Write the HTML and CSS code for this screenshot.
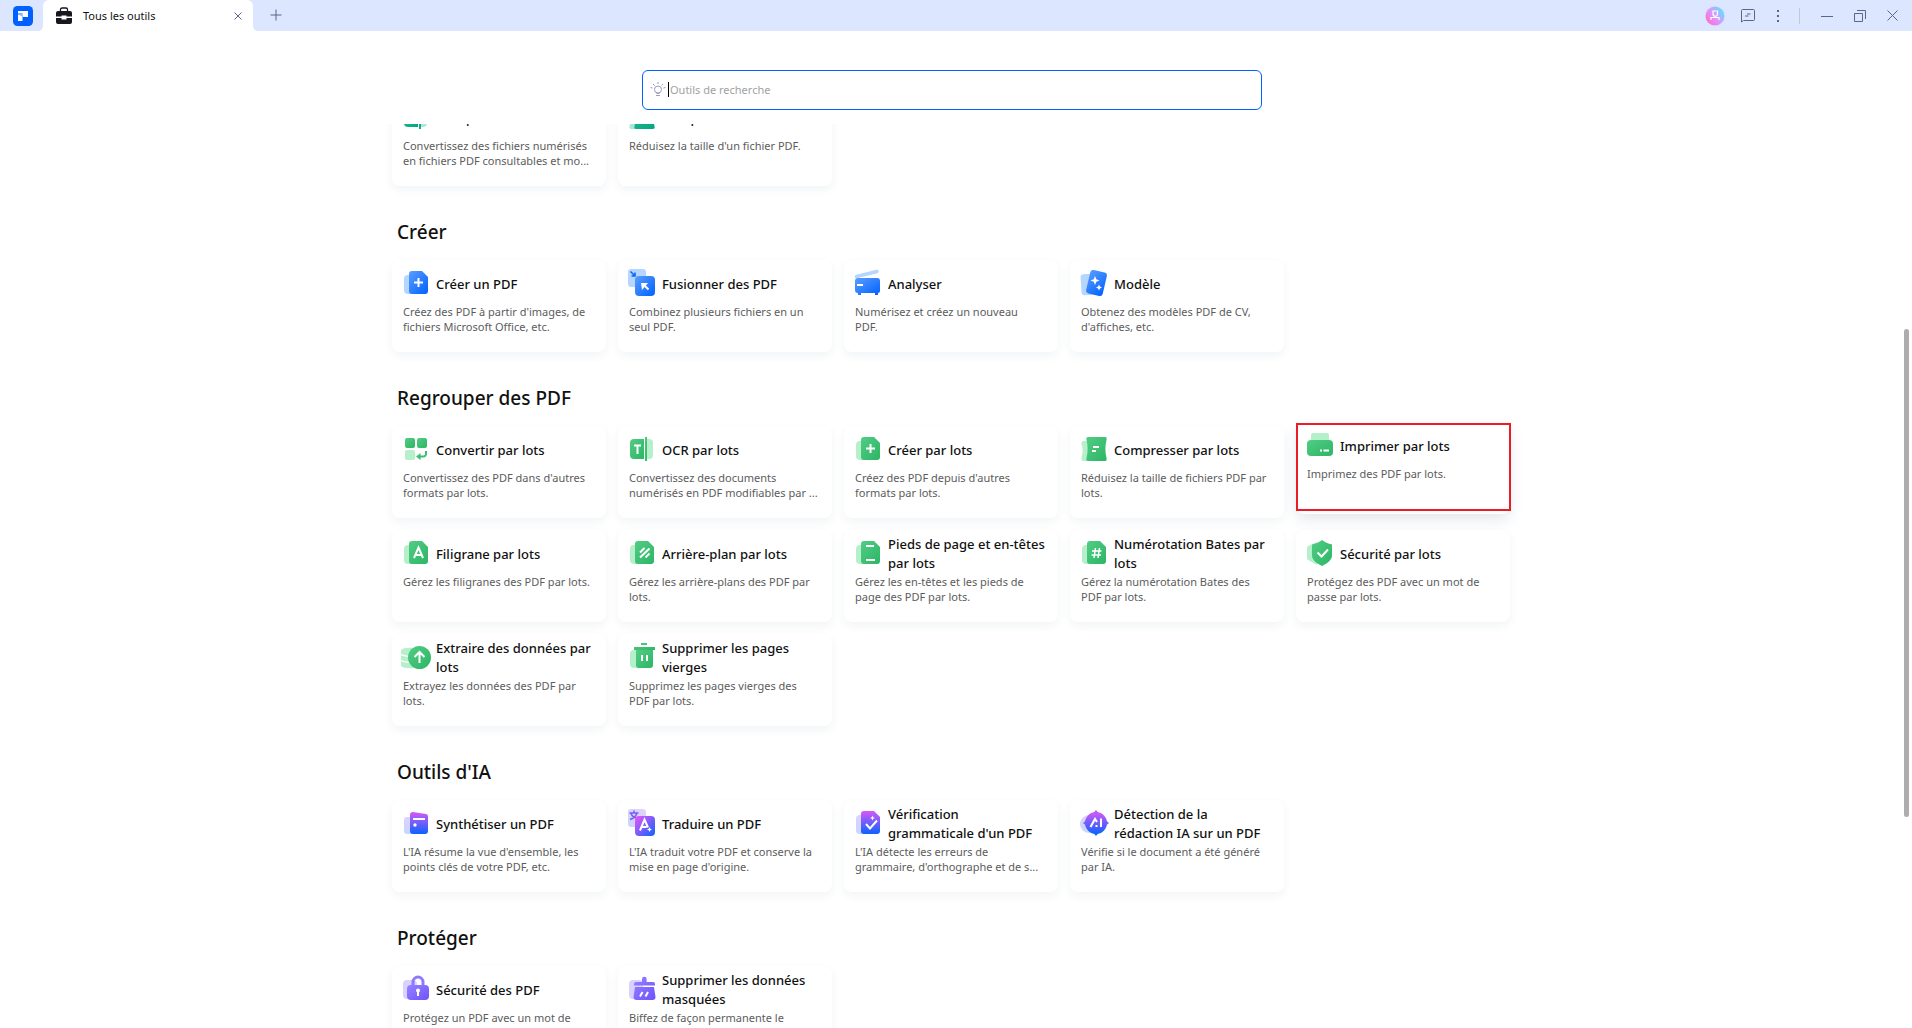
FILE: index.html
```html
<!DOCTYPE html>
<html lang="fr">
<head>
<meta charset="utf-8">
<title>Tous les outils</title>
<link rel="stylesheet" href="styles.css">
</head>
<body>
<svg class="defs" aria-hidden="true">
  <defs>
    <linearGradient id="blue" x1="0" y1="0" x2="1" y2="1"><stop offset="0" stop-color="#5a9dff"/><stop offset="1" stop-color="#0062ff"/></linearGradient>
    <linearGradient id="green" x1="0" y1="0" x2="1" y2="1"><stop offset="0" stop-color="#52cd84"/><stop offset="1" stop-color="#2cb565"/></linearGradient>
    <linearGradient id="teal" x1="0" y1="0" x2="1" y2="1"><stop offset="0" stop-color="#1fbf96"/><stop offset="1" stop-color="#07a57e"/></linearGradient>
    <linearGradient id="violet" x1="0" y1="0" x2="1" y2="1"><stop offset="0" stop-color="#9583ff"/><stop offset="1" stop-color="#6f52ff"/></linearGradient>
    <linearGradient id="ai" x1="0" y1="0" x2="0" y2="1"><stop offset="0" stop-color="#d758f7"/><stop offset="1" stop-color="#0a63ff"/></linearGradient>
    <linearGradient id="aid" x1="0" y1="0" x2="1" y2="1"><stop offset="0.1" stop-color="#d758f7"/><stop offset="1" stop-color="#0a63ff"/></linearGradient>
    <linearGradient id="ailight" x1="0" y1="1" x2="1" y2="0"><stop offset="0" stop-color="#c5d6ff"/><stop offset="1" stop-color="#e5d2fd"/></linearGradient>
    <linearGradient id="avatar" x1="0.2" y1="0.9" x2="1" y2="0.3"><stop offset="0" stop-color="#ff6fd8"/><stop offset="0.5" stop-color="#d59bff"/><stop offset="1" stop-color="#5fe0ff"/></linearGradient>
  </defs>
  <symbol id="doc" viewBox="0 0 32 30">
    <path d="M12 2h10l6 6v14a3 3 0 0 1-3 3H12a3 3 0 0 1-3-3V5a3 3 0 0 1 3-3z"/>
  </symbol>
  <symbol id="back" viewBox="0 0 32 30">
    <path d="M8 6h4v19H8a4 4 0 0 1-4-4V10a4 4 0 0 1 4-4z"/>
  </symbol>
  <symbol id="ocr" viewBox="0 0 32 30">
    <path class="main" d="M8 4h10v20H8a4 4 0 0 1-4-4V8a4 4 0 0 1 4-4z"/>
    <path class="soft" d="M21 4h2a4 4 0 0 1 4 4v12a4 4 0 0 1-4 4h-2z"/>
    <path class="main" d="M19 2h2v24h-2z"/>
    <path class="mark" d="M8 10.500h7M11.500 10.500V19"/>
  </symbol>
  <symbol id="squeeze" viewBox="0 0 32 30">
    <path class="soft" d="M6 6h6v20H6c-2 0-3-1-2.500-3 1.500-5 1.500-9 0-14C3 7 4 6 6 6z"/>
    <path class="main" d="M10 2h17c1.500 0 2 1 1.500 3-1.500 6-1.500 12 0 18 .5 2 0 3-1.500 3H10c-1.500 0-2-1-1.500-3 1.500-6 1.500-12 0-18C8 3 8.500 2 10 2z"/>
    <path class="mark" d="M15 12h6M14 16h4"/>
  </symbol>
</svg>

<header class="titlebar">
  <button class="home" aria-label="Accueil">
    <svg width="20" height="20" viewBox="0 0 20 20"><rect width="20" height="20" rx="4.500" fill="#0061ff"/><path d="M5 5h10v6H9.500V7.500H5z" fill="#fff"/><path d="M5 8.500h4.500V15H5z" fill="#fff"/><path d="M5 8.500h5V11z" fill="#9cc2ff"/></svg>
  </button>
  <div class="tab">
    <svg width="16" height="18" viewBox="0 0 16 18" fill="#16181d"><path d="M4.500 5V2.500a1.500 1.500 0 0 1 1.500-1.500h4a1.500 1.500 0 0 1 1.500 1.500V5" fill="none" stroke="#16181d" stroke-width="1.300"/><path d="M2 4h12a2 2 0 0 1 2 2v3.500h-5.500V8.500h-5v1H0V6a2 2 0 0 1 2-2zM0 11h5.500v1.500h5V11H16v4a2 2 0 0 1-2 2H2a2 2 0 0 1-2-2z"/></svg>
    <span class="tab-name">Tous les outils</span>
    <button aria-label="Fermer l'onglet"><svg width="8" height="8" viewBox="0 0 8 8" class="line"><path d="M.5.5l7 7M7.500.5l-7 7"/></svg></button>
  </div>
  <button class="new-tab" aria-label="Nouvel onglet"><svg width="12" height="12" viewBox="0 0 12 12" class="line"><path d="M6 .5v11M.5 6h11"/></svg></button>
  <div class="window-controls">
    <button class="account" aria-label="Compte"><svg width="20" height="20" viewBox="0 0 20 20"><circle cx="10" cy="10" r="9.500" fill="url(#avatar)"/><g fill="none" stroke="#fff" stroke-width="1.200"><path d="M8 5h4.500v3A2.250 2.250 0 0 1 8 8z"/><path d="M6 14v-2.500h8V14"/></g></svg></button>
    <button aria-label="Commentaires"><svg width="14" height="14" viewBox="0 0 14 14" class="line"><path d="M.5 13V1.500a1 1 0 0 1 1-1h11a1 1 0 0 1 1 1v9a1 1 0 0 1-1 1H2.500zM6 5h3.500M4 7h3.500"/></svg></button>
    <button class="more" aria-label="Plus"><svg width="4" height="14" viewBox="0 0 4 14" fill="#5b6587"><path d="M1 1h2v2H1zM1 6h2v2H1zM1 11h2v2H1z"/></svg></button>
    <span class="divider"></span>
    <button aria-label="Réduire"><svg width="12" height="12" viewBox="0 0 12 12" class="line"><path d="M0 6.500h12"/></svg></button>
    <button aria-label="Restaurer"><svg width="12" height="12" viewBox="0 0 12 12" class="line"><path d="M.5 3.500h8v8h-8zM3 .5h8.500V9"/></svg></button>
    <button aria-label="Fermer"><svg width="11" height="11" viewBox="0 0 11 11" class="line"><path d="M.5.5l10 10M10.500.5l-10 10"/></svg></button>
  </div>
</header>

<div class="search-row">
  <label class="search">
    <svg width="16" height="16" viewBox="0 0 16 16" fill="none" stroke="#9a9cc0"><circle cx="8" cy="8.500" r="3.500"/><path d="M6 14.500h4M6.500 12.500h3M8 1v2M3 3l1.500 1.500M13 3l-1.500 1.500M.5 6.500l2 .5M15.500 6.500l-2 .5"/></svg>
    <span class="caret"></span>
    <input type="text" placeholder="Outils de recherche" aria-label="Outils de recherche">
  </label>
</div>

<main class="tools">
  <div class="content">
    <section class="group scrolled">
      <div class="grid">
        <a class="card teal" href="#"><div class="head"><svg class="icon"><use href="#ocr"/></svg><h3>OCR pour PDF</h3></div><p>Convertissez des fichiers numérisés<br>en fichiers PDF consultables et mo...</p></a>
        <a class="card teal" href="#"><div class="head"><svg class="icon"><use href="#squeeze"/></svg><h3>Compresser un PDF</h3></div><p>Réduisez la taille d'un fichier PDF.</p></a>
      </div>
    </section>

    <section class="group">
      <h2>Créer</h2>
      <div class="grid">
        <a class="card blue" href="#"><div class="head"><svg class="icon" viewBox="0 0 32 30"><use class="soft" href="#back"/><use class="main" href="#doc"/><path class="mark" d="M18.500 9v9M14 13.500h9"/></svg><h3>Créer un PDF</h3></div><p>Créez des PDF à partir d'images, de fichiers Microsoft Office, etc.</p></a>
        <a class="card blue" href="#"><div class="head"><svg class="icon" viewBox="0 0 32 30"><rect class="soft" x="2" y="0" width="18" height="18" rx="3"/><path d="M4.500 2.500l4 4M9 3.500V7H5.500" fill="none" stroke="#0a69f5" stroke-width="1.600"/><rect class="main" x="9" y="7" width="20" height="20" rx="4"/><path class="mark" d="M17 15l5.500 5.500"/><path fill="#fff" d="M15 14h7l-6 7z"/></svg><h3>Fusionner des PDF</h3></div><p>Combinez plusieurs fichiers en un<br>seul PDF.</p></a>
        <a class="card blue" href="#"><div class="head"><svg class="icon" viewBox="0 0 32 30"><path d="M4.500 7.500L25 2.500" fill="none" stroke="#b5d7ff" stroke-width="3.500" stroke-linecap="round"/><path class="main" d="M6 9h19a3 3 0 0 1 3 3v10a2 2 0 0 1-2 2v2h-3v-2H9v2H6v-2a3 3 0 0 1-3-3v-9a3 3 0 0 1 3-3z"/><path class="mark" d="M5 16h6"/></svg><h3>Analyser</h3></div><p>Numérisez et créez un nouveau<br>PDF.</p></a>
        <a class="card blue" href="#"><div class="head"><svg class="icon" viewBox="0 0 32 30"><rect class="soft" x="3" y="5" width="14" height="21" rx="3" transform="rotate(-4 10 15)"/><rect class="main" x="10" y="2" width="17" height="24" rx="3" transform="rotate(13 18.500 14)"/><path fill="#fff" d="M17 7l1.300 3.200L21.500 11.500l-3.200 1.300L17 16l-1.300-3.200-3.200-1.300 3.200-1.300zM21 15.500l.9 2.100 2.100.9-2.100.9L21 21.500l-.9-2.100-2.100-.9 2.100-.9z"/></svg><h3>Modèle</h3></div><p>Obtenez des modèles PDF de CV,<br>d'affiches, etc.</p></a>
      </div>
    </section>

    <section class="group">
      <h2>Regrouper des PDF</h2>
      <div class="grid">
        <a class="card green" href="#"><div class="head"><svg class="icon" viewBox="0 0 32 30"><rect class="main" x="5" y="3" width="10" height="10" rx="2"/><rect class="main" x="17" y="3" width="10" height="10" rx="2"/><rect class="soft" x="5" y="15" width="10" height="10" rx="2"/><path d="M26 16v3a2.500 2.500 0 0 1-2.500 2.500H18" fill="none" stroke="#3cbf72" stroke-width="2"/><path class="main" d="M20.500 18v7L16 21.500z"/></svg><h3>Convertir par lots</h3></div><p>Convertissez des PDF dans d'autres formats par lots.</p></a>
        <a class="card green" href="#"><div class="head"><svg class="icon"><use href="#ocr"/></svg><h3>OCR par lots</h3></div><p>Convertissez des documents<br>numérisés en PDF modifiables par ...</p></a>
        <a class="card green" href="#"><div class="head"><svg class="icon" viewBox="0 0 32 30"><use class="soft" href="#back"/><use class="main" href="#doc"/><path class="mark" d="M18.500 9v9M14 13.500h9"/></svg><h3>Créer par lots</h3></div><p>Créez des PDF depuis d'autres<br>formats par lots.</p></a>
        <a class="card green" href="#"><div class="head"><svg class="icon"><use href="#squeeze"/></svg><h3>Compresser par lots</h3></div><p>Réduisez la taille de fichiers PDF par lots.</p></a>
        <a class="card green raised" href="#"><div class="head"><svg class="icon" viewBox="0 0 32 30"><path class="soft" d="M9 2h14a2 2 0 0 1 2 2v5H7V4a2 2 0 0 1 2-2z"/><rect class="main" x="3" y="9" width="26" height="16" rx="4"/><path class="mark" d="M16 19.500h2M19.500 19.500H25"/></svg><h3>Imprimer par lots</h3></div><p>Imprimez des PDF par lots.</p><span class="marker"></span></a>
        <a class="card green" href="#"><div class="head"><svg class="icon" viewBox="0 0 32 30"><use class="soft" href="#back"/><use class="main" href="#doc"/><path class="mark" d="M14 19l4.500-10.500L23 19M15.500 16h6"/></svg><h3>Filigrane par lots</h3></div><p>Gérez les filigranes des PDF par lots.</p></a>
        <a class="card green" href="#"><div class="head"><svg class="icon" viewBox="0 0 32 30"><use class="soft" href="#back"/><use class="main" href="#doc"/><path class="mark" d="M14 13.500l4.500-4.500M14 18.500l9.500-9M19.500 18.500l4-4"/></svg><h3>Arrière-plan par lots</h3></div><p>Gérez les arrière-plans des PDF par<br>lots.</p></a>
        <a class="card green" href="#"><div class="head"><svg class="icon" viewBox="0 0 32 30"><use class="soft" href="#back"/><use class="main" href="#doc"/><path class="mark" d="M14 7h8M14 21h9"/></svg><h3>Pieds de page et en-têtes par lots</h3></div><p>Gérez les en-têtes et les pieds de<br>page des PDF par lots.</p></a>
        <a class="card green" href="#"><div class="head"><svg class="icon" viewBox="0 0 32 30"><use class="soft" href="#back"/><use class="main" href="#doc"/><path class="mark thin" d="M17.500 9l-1.500 10M21.500 9L20 19M14 12h9.500M13.500 16H23"/></svg><h3>Numérotation Bates par lots</h3></div><p>Gérez la numérotation Bates des<br>PDF par lots.</p></a>
        <a class="card green" href="#"><div class="head"><svg class="icon" viewBox="0 0 32 30"><path class="soft" d="M13 3v23l-8-4.500a3 3 0 0 1-2-3V9a3 3 0 0 1 2-2.500z"/><path class="main" d="M18 1c3 2.500 6 3.500 10 4.500v11c0 4-4 7.500-10 10.500C12 24 8 20.500 8 16.500v-11C12 4.500 15 3.500 18 1z"/><path class="mark" d="M13.500 13.500l4 4 6.500-7"/></svg><h3>Sécurité par lots</h3></div><p>Protégez des PDF avec un mot de<br>passe par lots.</p></a>
        <a class="card green" href="#"><div class="head"><svg class="icon" viewBox="0 0 32 30"><path class="soft" d="M1 7c2-2 7-2.500 12-2v20c-5 .5-10 0-12-2z"/><path d="M0 11c3 2 7 2.500 12 2.500M0 17c3 2 7 2.500 12 2.500" fill="none" stroke="#fff" stroke-width="1.300"/><circle class="main" cx="19.500" cy="14.500" r="11.500"/><path class="mark" d="M19.500 20V9.500M14.500 14l5-5 5 5"/></svg><h3>Extraire des données par lots</h3></div><p>Extrayez les données des PDF par<br>lots.</p></a>
        <a class="card green" href="#"><div class="head"><svg class="icon" viewBox="0 0 32 30"><rect class="soft" x="4" y="7" width="12" height="18" rx="4"/><path class="main" d="M15 0h6v2h-6zM8 4h21v3H8z"/><path class="main" d="M10 7h17v15a3 3 0 0 1-3 3H13a3 3 0 0 1-3-3z"/><path class="mark" d="M16 12v6M21 12v6"/></svg><h3>Supprimer les pages vierges</h3></div><p>Supprimez les pages vierges des<br>PDF par lots.</p></a>
      </div>
    </section>

    <section class="group">
      <h2>Outils d'IA</h2>
      <div class="grid">
        <a class="card ai" href="#"><div class="head"><svg class="icon" viewBox="0 0 32 30"><rect class="soft" x="4" y="8" width="12" height="17" rx="3"/><path class="main" d="M13 3l13 2a2.500 2.500 0 0 1 2 2.500V22a3 3 0 0 1-3 3H13a3 3 0 0 1-3-3V6a3 3 0 0 1 3-3z"/><path class="mark" d="M13 10h12"/><circle cx="15" cy="16" r="1.700" fill="#fff"/></svg><h3>Synthétiser un PDF</h3></div><p>L'IA résume la vue d'ensemble, les<br>points clés de votre PDF, etc.</p></a>
        <a class="card ai" href="#"><div class="head"><svg class="icon" viewBox="0 0 32 30"><rect class="soft" x="2" y="0" width="18" height="18" rx="3"/><path d="M3.500 4h9M8 1.500V4M11 4c-1 3-3.500 5.500-7 6.500M5 4c.5 2.500 3 4.500 6 5" fill="none" stroke="#7a5cf5" stroke-width="1.500"/><rect x="9" y="7" width="20" height="20" rx="4" fill="url(#aid)"/><path class="mark" d="M14 21.500l4.500-11 3.500 8M15.500 18h5"/><path fill="#fff" d="M23.500 18l.8 1.700 1.700.8-1.700.8-.8 1.700-.8-1.700-1.700-.8 1.700-.8z"/></svg><h3>Traduire un PDF</h3></div><p>L'IA traduit votre PDF et conserve la<br>mise en page d'origine.</p></a>
        <a class="card ai" href="#"><div class="head"><svg class="icon" viewBox="0 0 32 30"><use class="soft" href="#back"/><use class="main" href="#doc"/><path class="mark" d="M14 15l4 4.500 7-8"/><path fill="#fff" d="M20.500 6.500l.7 1.800 1.800.7-1.800.7-.7 1.800-.7-1.800-1.800-.7 1.800-.7z"/></svg><h3>Vérification<br>grammaticale d'un PDF</h3></div><p>L'IA détecte les erreurs de<br>grammaire, d'orthographe et de s...</p></a>
        <a class="card ai" href="#"><div class="head"><svg class="icon" viewBox="0 0 32 30"><circle class="soft" cx="11" cy="15" r="9"/><circle class="main" cx="18" cy="14" r="11"/><path fill="#b35bf9" d="M18 1l2.500 3h-5z"/><path fill="#7a5ffc" d="M5 14l3-2.500v5zM31 14l-3-2.500v5z"/><path fill="#1465ff" d="M18 27l-2.500-3h5z"/><path class="mark" d="M12.500 18l4.500-8 2 3M23 9.500V18M17.500 17h2"/></svg><h3>Détection de la<br>rédaction IA sur un PDF</h3></div><p>Vérifie si le document a été généré<br>par IA.</p></a>
      </div>
    </section>

    <section class="group">
      <h2>Protéger</h2>
      <div class="grid">
        <a class="card violet" href="#"><div class="head"><svg class="icon" viewBox="0 0 32 30"><rect class="soft" x="3" y="5" width="14" height="19" rx="4"/><path d="M13 11V7a5 5 0 0 1 10 0v4" fill="none" stroke="#8e7aff" stroke-width="3"/><rect class="main" x="7" y="10" width="22" height="15" rx="4"/><circle cx="18" cy="15.500" r="2" fill="#fff"/><path class="mark" d="M18 16v5"/></svg><h3>Sécurité des PDF</h3></div><p>Protégez un PDF avec un mot de<br>passe.</p></a>
        <a class="card violet" href="#"><div class="head"><svg class="icon" viewBox="0 0 32 30"><rect class="soft" x="3" y="5" width="14" height="19" rx="4"/><path class="main" d="M16 7V4a2.300 2.300 0 0 1 4.600 0v3H27a2 2 0 0 1 2 2v1.500H8V9a2 2 0 0 1 2-2zM9 12h19l1.500 10a3 3 0 0 1-3 3h-16a3 3 0 0 1-3-3z"/><path class="mark" d="M16.500 17L14 21.500M22 17l-2.500 4.500"/></svg><h3>Supprimer les données masquées</h3></div><p>Biffez de façon permanente le<br>contenu.</p></a>
      </div>
    </section>
  </div>
  <span class="scroll-thumb"></span>
</main>
</body>
</html>
```
FILE: styles.css
```css
* { box-sizing: border-box; }

body {
  margin: 0;
  height: 100vh;
  display: flex;
  flex-direction: column;
  overflow: hidden;
  background: #fff;
  color: #111;
  font: 400 11px/15px "Noto Sans", sans-serif;
}

h2, h3, p { margin: 0; }
svg { display: block; flex: none; }

button {
  display: flex;
  align-items: center;
  justify-content: center;
  padding: 0;
  border: 0;
  background: none;
}

.defs { position: absolute; width: 0; height: 0; }
.line { fill: none; stroke: #5b6587; }

/* Title bar */
.titlebar {
  display: flex;
  align-items: center;
  flex: none;
  height: 31px;
  background: #dce6ff;
}

.home { width: 43px; padding-left: 3px; }

.tab {
  position: relative;
  display: flex;
  align-items: center;
  gap: 11px;
  width: 210px;
  height: 31px;
  padding: 0 11px 0 13px;
  border-radius: 6px 6px 0 0;
  background: #fff;
}

.tab::before,
.tab::after {
  content: "";
  position: absolute;
  bottom: 0;
  width: 5px;
  height: 5px;
}
.tab::before { right: 100%; background: radial-gradient(circle at 0 0, transparent 5px, #fff 5px); }
.tab::after { left: 100%; background: radial-gradient(circle at 100% 0, transparent 5px, #fff 5px); }

.tab-name { flex: 1; }
.new-tab { width: 45px; height: 31px; padding-bottom: 2px; }

.window-controls {
  display: flex;
  align-items: center;
  gap: 21px;
  margin-left: auto;
  padding-right: 14px;
}
.account { margin-right: -5px; }
.more { margin-right: -2px; }
.divider { width: 1px; height: 16px; background: #c4c8d4; }

/* Search */
.search-row {
  display: flex;
  justify-content: center;
  flex: none;
  padding: 39px 8px 14px 0;
}

.search {
  display: flex;
  align-items: center;
  width: 100%;
  max-width: 620px;
  height: 40px;
  padding: 0 7px 2px;
  border: 1px solid #0061ff;
  border-radius: 6px;
}

.caret { width: 1px; height: 15px; margin-left: 2px; background: #000; }

.search input {
  flex: 1;
  min-width: 0;
  padding: 0 0 0 1px;
  border: 0;
  outline: 0;
  background: none;
  color: #111;
  font: inherit;
}
.search input::placeholder { color: #a2a2a2; opacity: 1; }

/* Tool list */
.tools {
  position: relative;
  flex: 1;
  min-height: 0;
  padding-right: 10px;
  overflow: hidden;
}

.content { max-width: 1118px; margin: 0 auto; }

.group { padding-top: 32px; }
.group.scrolled { margin-top: -30px; padding-top: 0; }

.group h2 {
  padding: 0 5px 14px;
  font-size: 19px;
  line-height: 28px;
  font-weight: 500;
}

.grid {
  display: grid;
  grid-template-columns: repeat(auto-fill, minmax(210px, 1fr));
  gap: 12px;
}

.card {
  position: relative;
  height: 92px;
  padding: 4px 0 0 8px;
  border-radius: 8px;
  background: #fff;
  box-shadow: 0 4px 10px rgba(40, 70, 110, 0.06);
  color: #111;
  text-decoration: none;
}

.raised {
  transform: translateY(-4px);
  box-shadow: 0 6px 14px rgba(40, 70, 110, 0.12);
}

.marker {
  position: absolute;
  inset: 1px -1px 3px 0;
  border: 2px solid #ec1c24;
}

.head {
  display: flex;
  align-items: center;
  gap: 4px;
  height: 40px;
}

.head h3 {
  font-size: 13px;
  line-height: 19px;
  font-weight: 500;
}

.card p {
  padding: 0 8px 0 3px;
  color: #5c5c5c;
}

.icon { width: 32px; height: 30px; }

/* Icon colours: a solid front layer, a pale back layer and white details */
.main { fill: var(--main); }
.soft { fill: var(--soft); }
.mark { fill: none; stroke: #fff; stroke-width: 2; }
.mark.thin { stroke-width: 1.5; }

.blue { --main: url(#blue); --soft: #b5d7ff; }
.green { --main: url(#green); --soft: #b5f0ca; }
.teal { --main: url(#teal); --soft: #a8e8d5; }
.violet { --main: url(#violet); --soft: #d9d2ff; }
.ai { --main: url(#ai); --soft: url(#ailight); }

/* Scroll bar */
.scroll-thumb {
  position: absolute;
  top: calc(23% - 3px);
  right: 3px;
  width: 5px;
  height: 54%;
  border-radius: 3px;
  background: #adadad;
}
```
